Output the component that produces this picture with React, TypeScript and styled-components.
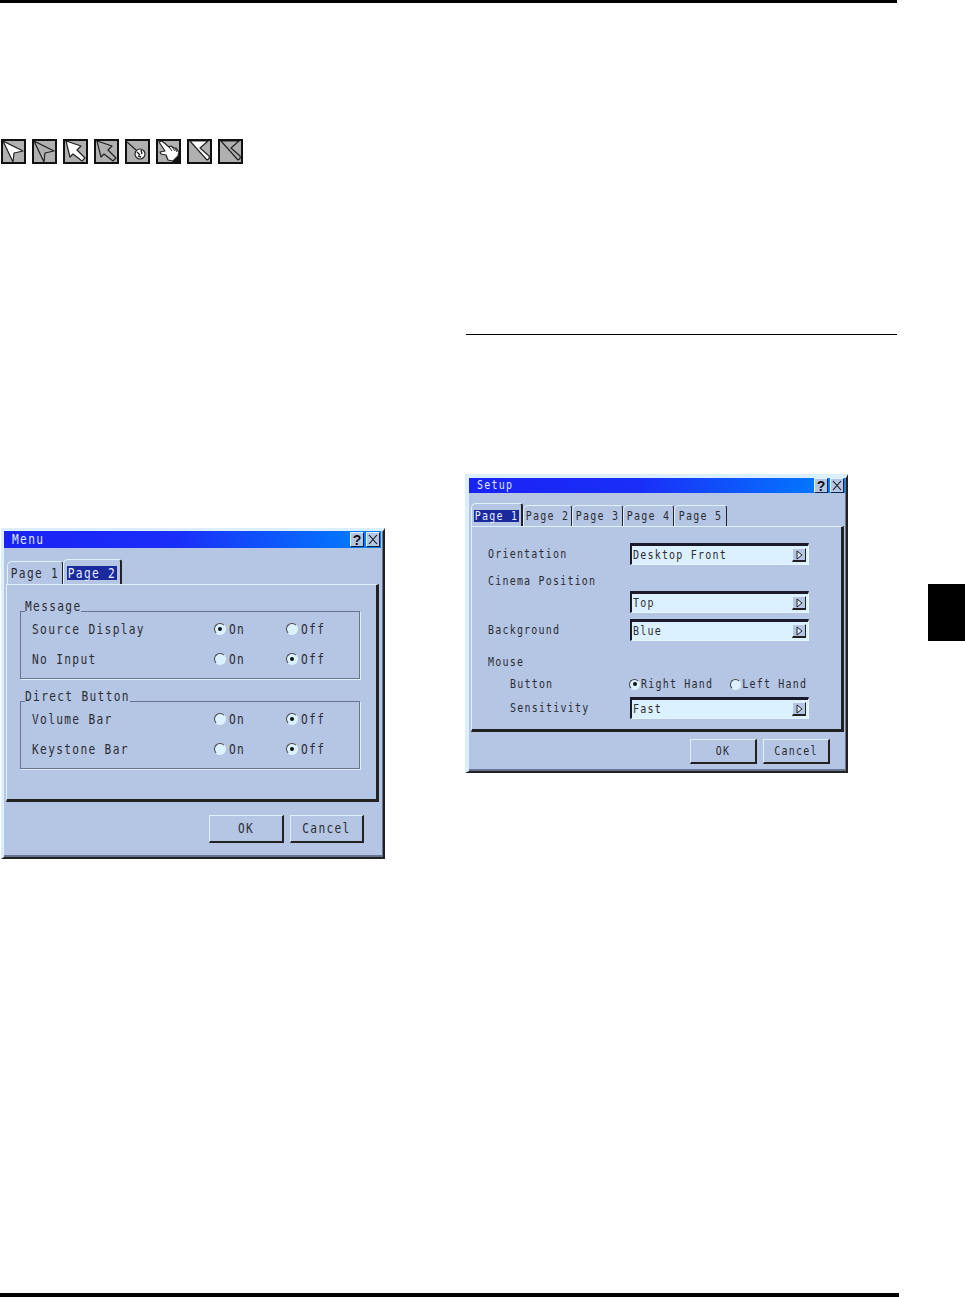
import React from 'react';
import styled, { createGlobalStyle } from 'styled-components';

const GlobalStyle = createGlobalStyle`
  * {
    box-sizing: border-box;
  }
  body {
    margin: 0;
    background: #fff;
    font-family: 'DejaVu Sans Mono', monospace;
  }
`;

const Page = styled.div`
  width: 965px;
  height: 1297px;
  display: flex;
  flex-direction: column;
  overflow: hidden;
`;

const TopRule = styled.div`
  width: 897px;
  height: 3px;
  background: #000;
`;

const BottomRule = styled.div`
  width: 899px;
  height: 4px;
  background: #000;
`;

const Columns = styled.div`
  flex: 1;
  display: flex;
`;

const LeftColumn = styled.div`
  width: 386px;
  padding: 136px 0 0 1px;
`;

const RightColumn = styled.div`
  width: 431px;
  margin-left: 80px;
`;

const SectionRule = styled.div`
  height: 1px;
  margin: 331px 0 139px;
  background: #000;
`;

const ChapterTab = styled.div`
  width: 37px;
  height: 57px;
  margin: 581px 0 0 31px;
  background: #000;
`;

const CursorRow = styled.div`
  display: flex;
  gap: 6px;
  margin-bottom: 364px;
`;

const CursorBox = styled.svg`
  display: block;
  width: 25px;
  height: 25px;
  background: #b0b0b0;
  border: 2px solid #111;
`;

// the projector's bitmap font is tall and narrow, so the glyphs get stretched
const Caption = styled.span`
  display: inline-block;
  transform: translateY(var(--lift, 0)) scaleY(1.3);
  white-space: pre;
`;

const Dialog = styled.div<{
  $width: number;
  $height: number;
  $font: number;
  $track: number;
  $edge: number;
  $rim: number;
  $lift?: number;
  $shift?: number;
}>`
  --lift: ${(p) => p.$lift ?? 0}px;
  width: ${(p) => p.$width}px;
  height: ${(p) => p.$height}px;
  margin-left: ${(p) => p.$shift ?? 0}px;
  padding-right: ${(p) => p.$rim}px;
  display: flex;
  flex-direction: column;
  background: #b4c6e4;
  color: #2c2c34;
  font-size: ${(p) => p.$font}px;
  letter-spacing: ${(p) => p.$track}px;
  border-style: solid;
  border-width: ${(p) => p.$edge}px 2px 2px ${(p) => p.$edge}px;
  border-color: #dcefff #222 #222 #dcefff;
  box-shadow: inset 0 -2px 0 #68748f, inset -1px 0 0 #68748f;
`;

const TitleBar = styled.div<{ $height: number }>`
  height: ${(p) => p.$height}px;
  display: flex;
  align-items: center;
  justify-content: space-between;
  padding: 0 1px 0 8px;
  background: linear-gradient(90deg, #1a22f5 0%, #1a2ef8 45%, #0082ff 100%);
  color: #dfe8ff;
`;

const TitleButtons = styled.div`
  display: flex;
  gap: 2px;
`;

const TitleButton = styled.span`
  width: 14px;
  height: 15px;
  display: flex;
  align-items: center;
  justify-content: center;
  background: #b4c6e4;
  border: 1px solid #0e2350;
  border-top-color: #dff1ff;
  border-left-color: #dff1ff;
  color: #111;
  letter-spacing: 0;
  font: bold 14px 'Liberation Sans', sans-serif;
`;

const TabStrip = styled.div<{ $height: number; $indent: number }>`
  height: ${(p) => p.$height}px;
  display: flex;
  align-items: flex-end;
  padding-left: ${(p) => p.$indent}px;
`;

const Tab = styled.div<{ $width: number; $height: number; $active?: boolean }>`
  width: ${(p) => p.$width}px;
  height: ${(p) => p.$height}px;
  display: flex;
  align-items: flex-end;
  justify-content: center;
  padding-bottom: 4px;
  border-top: 1px solid #dff1ff;
  border-left: 1px solid #dff1ff;
  border-right: ${(p) => (p.$active ? 2 : 1)}px solid #222;
  border-radius: 5px 3px 0 0;
`;

const TabLabel = styled.span<{ $active?: boolean }>`
  padding: 1px 1px 0;
  background: ${(p) => (p.$active ? '#1a2a9c' : 'transparent')};
  color: ${(p) => (p.$active ? '#e6eeff' : 'inherit')};
`;

const Panel = styled.div<{ $height: number; $pad: string; $right: number }>`
  height: ${(p) => p.$height}px;
  margin: 0 ${(p) => p.$right}px 0 2px;
  padding: ${(p) => p.$pad};
  border-style: solid;
  border-width: 1px 3px 3px 1px;
  border-color: #dff1ff #222 #222 #dff1ff;
`;

const GroupTitle = styled.div`
  position: relative;
  width: max-content;
  height: 13px;
  margin: 0 0 -2px 5px;
  line-height: 14px;
  background: #b4c6e4;
`;

const GroupBox = styled.div`
  height: 68px;
  margin-bottom: 11px;
  padding-top: 2px;
  border: 1px solid #68748f;
  box-shadow: 1px 1px 0 #dff1ff;
`;

const OptionRow = styled.div`
  height: 30px;
  display: grid;
  grid-template-columns: 182px 72px 1fr;
  align-items: center;
  padding-left: 11px;
`;

const Option = styled.div<{ $gap: number }>`
  display: flex;
  align-items: center;
  gap: ${(p) => p.$gap}px;
`;

const Radio = styled.span<{ $checked?: boolean; $size: number }>`
  width: ${(p) => p.$size}px;
  height: ${(p) => p.$size}px;
  display: flex;
  align-items: center;
  justify-content: center;
  border-radius: 50%;
  background: #dcf1ff;
  border: 1px solid #dcf1ff;
  border-left-color: #444;
  border-top-color: #444;

  &::after {
    content: '';
    width: 4px;
    height: 4px;
    border-radius: 50%;
    background: ${(p) => (p.$checked ? '#111' : 'transparent')};
  }
`;

const FormRow = styled.div<{ $height: number; $gap?: number; $indent?: number }>`
  height: ${(p) => p.$height}px;
  margin-bottom: ${(p) => p.$gap ?? 0}px;
  padding-left: ${(p) => p.$indent ?? 0}px;
  display: grid;
  grid-template-columns: ${(p) => 142 - (p.$indent ?? 0)}px 179px;
  align-items: center;
`;

const HandOptions = styled.div`
  display: flex;
  gap: 17px;
  margin-left: -1px;
`;

const Field = styled.div`
  height: 22px;
  display: flex;
  align-items: center;
  justify-content: space-between;
  padding: 0 2px 0 1px;
  background: #dcf1ff;
  border-style: solid;
  border-width: 3px 1px 1px 2px;
  border-color: #1a1a2a #e8f6ff #e8f6ff #1a1a2a;
`;

const FieldArrow = styled.span`
  width: 14px;
  height: 14px;
  display: flex;
  align-items: center;
  justify-content: center;
  background: #b4c6e4;
  border-style: solid;
  border-width: 1px 1px 2px 1px;
  border-color: #dff1ff #222 #222 #dff1ff;
`;

const Footer = styled.div<{ $top: number; $right: number }>`
  display: flex;
  justify-content: flex-end;
  gap: 6px;
  margin-top: ${(p) => p.$top}px;
  padding-right: ${(p) => p.$right}px;
`;

const PushButton = styled.div<{ $width: number; $height: number }>`
  width: ${(p) => p.$width}px;
  height: ${(p) => p.$height}px;
  display: flex;
  align-items: center;
  justify-content: center;
  border-style: solid;
  border-width: 1px 2px 2px 1px;
  border-color: #dff1ff #222 #222 #dff1ff;
`;

const line = { stroke: '#222', strokeWidth: 1.2, strokeLinejoin: 'round' as const };

const cursors = [
  <path d="M0 0 L20 10 L11 12 L10 21 Z" fill="#fff" {...line} />,
  <path d="M0 0 L20 10 L11 12 L10 21 Z" fill="none" {...line} />,
  <path d="M1 0 L16 5 L12 9 L20 17 L17 20 L8 13 L5 16 Z" fill="#fff" {...line} />,
  <path d="M1 0 L16 5 L12 9 L20 17 L17 20 L8 13 L5 16 Z" fill="none" {...line} />,
  <>
    <path d="M0 1 L9 9" {...line} />
    <circle cx="13" cy="13" r="5" fill="#fff" {...line} />
    <path d="M10 11 L13 14 M14 9 L15 13 M11 15 L14 16" stroke="#222" strokeWidth="1.4" />
  </>,
  <>
    <path d="M14 21 L21 21 L21 13 Z" fill="#111" />
    <path
      d="M1 1 L4 0 L11 6 L13 5 L16 7 L18 7 L21 11 L20 15 L15 20 L10 19 L8 14 L3 13 L2 11 L7 10 Z"
      fill="#fff"
      {...line}
    />
    <path d="M11 6 L14 10 M14 6 L17 10 M17 7 L19 11" stroke="#222" />
  </>,
  <path d="M1 0 L19 0 L11 7 L20 15 Q21 18 18 19 Z" fill="#fff" {...line} />,
  <path d="M1 0 L19 0 L11 7 L20 15 Q21 18 18 19 Z" fill="none" {...line} />,
];

const CursorIcons = () => (
  <CursorRow>
    {cursors.map((shape, i) => (
      <CursorBox key={i} viewBox="0 0 21 21">
        {shape}
      </CursorBox>
    ))}
  </CursorRow>
);

const Title = ({ text, height }: { text: string; height: number }) => (
  <TitleBar $height={height}>
    <Caption>{text}</Caption>
    <TitleButtons>
      <TitleButton>?</TitleButton>
      <TitleButton>
        <svg width="10" height="11" viewBox="0 0 10 11">
          <path d="M1 1 L9 10 M9 1 L1 10" stroke="#111" strokeWidth="1.1" />
        </svg>
      </TitleButton>
    </TitleButtons>
  </TitleBar>
);

const RadioPair = ({ label, on }: { label: string; on: boolean }) => (
  <OptionRow>
    <Caption>{label}</Caption>
    <Option $gap={3}>
      <Radio $size={12} $checked={on} />
      <Caption>On</Caption>
    </Option>
    <Option $gap={3}>
      <Radio $size={12} $checked={!on} />
      <Caption>Off</Caption>
    </Option>
  </OptionRow>
);

const Select = ({ value }: { value: string }) => (
  <Field>
    <Caption>{value}</Caption>
    <FieldArrow>
      <svg width="7" height="10" viewBox="0 0 7 10">
        <path d="M1 1 L6 5 L1 9 Z" fill="#dcf1ff" stroke="#222" />
      </svg>
    </FieldArrow>
  </Field>
);

const PageTab = (props: { label: string; width: number; height: number; active?: boolean }) => (
  <Tab $width={props.width} $height={props.height} $active={props.active}>
    <TabLabel $active={props.active}>
      <Caption>{props.label}</Caption>
    </TabLabel>
  </Tab>
);

const MenuDialog = () => (
  <Dialog $width={384} $height={331} $font={11.2} $track={1.33} $edge={3} $rim={2}>
    <Title text="Menu" height={17} />
    <TabStrip $height={36} $indent={3}>
      <PageTab label="Page 1" width={56} height={23} />
      <PageTab label="Page 2" width={59} height={25} active />
    </TabStrip>
    <Panel $height={218} $pad="15px 16px 0 13px" $right={2}>
      <GroupTitle>
        <Caption>Message</Caption>
      </GroupTitle>
      <GroupBox>
        <RadioPair label="Source Display" on />
        <RadioPair label="No Input" on={false} />
      </GroupBox>
      <GroupTitle>
        <Caption>Direct Button</Caption>
      </GroupTitle>
      <GroupBox>
        <RadioPair label="Volume Bar" on={false} />
        <RadioPair label="Keystone Bar" on={false} />
      </GroupBox>
    </Panel>
    <Footer $top={13} $right={17}>
      <PushButton $width={75} $height={28}>
        <Caption>OK</Caption>
      </PushButton>
      <PushButton $width={74} $height={28}>
        <Caption>Cancel</Caption>
      </PushButton>
    </Footer>
  </Dialog>
);

const SetupDialog = () => (
  <Dialog $width={383} $height={299} $font={10} $track={1.2} $edge={4} $rim={1} $lift={-1.5} $shift={-1}>
    <Title text="Setup" height={15} />
    <TabStrip $height={33} $indent={2}>
      <PageTab label="Page 1" width={52} height={23} active />
      <PageTab label="Page 2" width={49} height={21} />
      <PageTab label="Page 3" width={51} height={21} />
      <PageTab label="Page 4" width={51} height={21} />
      <PageTab label="Page 5" width={53} height={21} />
    </TabStrip>
    <Panel $height={206} $pad="16px 0 0 16px" $right={1}>
      <FormRow $height={22} $gap={7}>
        <Caption>Orientation</Caption>
        <Select value="Desktop Front" />
      </FormRow>
      <FormRow $height={19}>
        <Caption>Cinema Position</Caption>
      </FormRow>
      <FormRow $height={22} $gap={6}>
        <span />
        <Select value="Top" />
      </FormRow>
      <FormRow $height={22} $gap={11}>
        <Caption>Background</Caption>
        <Select value="Blue" />
      </FormRow>
      <FormRow $height={20} $gap={2}>
        <Caption>Mouse</Caption>
      </FormRow>
      <FormRow $height={20} $gap={3} $indent={22}>
        <Caption>Button</Caption>
        <HandOptions>
          <Option $gap={1}>
            <Radio $size={11} $checked />
            <Caption>Right Hand</Caption>
          </Option>
          <Option $gap={1}>
            <Radio $size={11} />
            <Caption>Left Hand</Caption>
          </Option>
        </HandOptions>
      </FormRow>
      <FormRow $height={22} $indent={22}>
        <Caption>Sensitivity</Caption>
        <Select value="Fast" />
      </FormRow>
    </Panel>
    <Footer $top={7} $right={15}>
      <PushButton $width={67} $height={25}>
        <Caption>OK</Caption>
      </PushButton>
      <PushButton $width={67} $height={25}>
        <Caption>Cancel</Caption>
      </PushButton>
    </Footer>
  </Dialog>
);

const App = () => (
  <Page>
    <GlobalStyle />
    <TopRule />
    <Columns>
      <LeftColumn>
        <CursorIcons />
        <MenuDialog />
      </LeftColumn>
      <RightColumn>
        <SectionRule />
        <SetupDialog />
      </RightColumn>
      <ChapterTab />
    </Columns>
    <BottomRule />
  </Page>
);

export default App;
